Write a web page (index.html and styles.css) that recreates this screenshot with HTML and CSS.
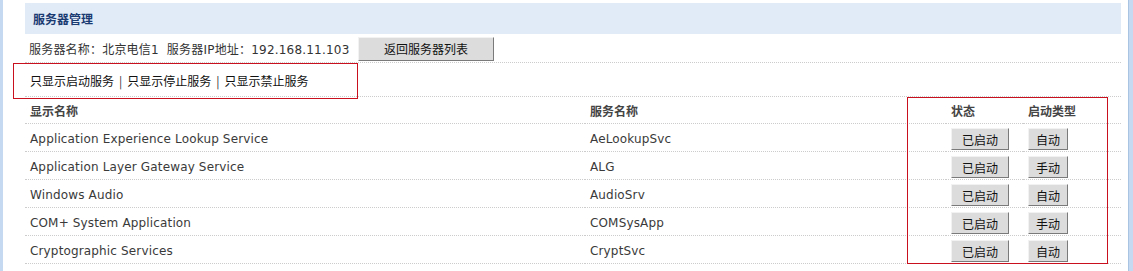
FILE: index.html
```html
<!DOCTYPE html>
<html lang="zh-CN">
<head>
    <meta charset="UTF-8">
    <title>服务器管理</title>
    <link rel="stylesheet" href="styles.css">
</head>
<body>
    <div class="frame">
        <div class="main">
            <div class="title-bar">服务器管理</div>
            <div class="info-row">
                <span class="info">服务器名称：北京电信1&nbsp;&nbsp;服务器IP地址：192.168.11.103</span>
                <button class="btn btn-back">返回服务器列表</button>
            </div>
            <div class="filter-row">
                <div class="filter-box">
                    <a href="#">只显示启动服务</a><span class="sep">|</span><a href="#">只显示停止服务</a><span class="sep">|</span><a href="#">只显示禁止服务</a>
                </div>
            </div>
            <table class="service-table">
                <thead>
                    <tr>
                        <th class="col-name">显示名称</th>
                        <th class="col-svc">服务名称</th>
                        <th class="col-state">状态</th>
                        <th class="col-type">启动类型</th>
                    </tr>
                </thead>
                <tbody>
                    <tr>
                        <td>Application Experience Lookup Service</td>
                        <td>AeLookupSvc</td>
                        <td><button class="btn btn-state">已启动</button></td>
                        <td><button class="btn btn-type">自动</button></td>
                    </tr>
                    <tr>
                        <td>Application Layer Gateway Service</td>
                        <td>ALG</td>
                        <td><button class="btn btn-state">已启动</button></td>
                        <td><button class="btn btn-type">手动</button></td>
                    </tr>
                    <tr>
                        <td>Windows Audio</td>
                        <td>AudioSrv</td>
                        <td><button class="btn btn-state">已启动</button></td>
                        <td><button class="btn btn-type">自动</button></td>
                    </tr>
                    <tr>
                        <td>COM+ System Application</td>
                        <td>COMSysApp</td>
                        <td><button class="btn btn-state">已启动</button></td>
                        <td><button class="btn btn-type">手动</button></td>
                    </tr>
                    <tr>
                        <td>Cryptographic Services</td>
                        <td>CryptSvc</td>
                        <td><button class="btn btn-state">已启动</button></td>
                        <td><button class="btn btn-type">自动</button></td>
                    </tr>
                </tbody>
            </table>
            <div class="state-box"></div>
        </div>
        <div class="side"></div>
    </div>
</body>
</html>
```

FILE: styles.css
```css
body {
    margin: 0;
    padding: 0;
    font-family: "DejaVu Sans", "Noto Sans CJK SC", sans-serif;
    font-size: 12px;
    color: #333;
    background: #fff;
    overflow: hidden;
}
.frame {
    display: flex;
    height: 271px;
    border-left: 3px solid #c5d9f1;
}
.main {
    position: relative;
    flex: 1;
    padding: 3px 7px 0 22px;
}
.side {
    width: 4px;
    background: #c5d9f1;
    border-left: 1px solid #a9c3e3;
}
.title-bar {
    height: 31px;
    line-height: 31px;
    padding-left: 8px;
    background: #e1ebf8;
    color: #1a3a72;
    font-family: "Noto Sans CJK SC", sans-serif;
    font-weight: bold;
}
.info-row {
    display: flex;
    align-items: center;
    height: 28px;
    padding-left: 4px;
    border-bottom: 1px dotted #ccc;
}
.info {
    width: 329px;
    letter-spacing: 0.2px;
}
.btn {
    background: #dcdcdc;
    border: 1px solid #f2f2f2;
    border-right-color: #7a7a7a;
    border-bottom-color: #7a7a7a;
    color: #111;
    font-family: "Noto Sans CJK SC", sans-serif;
    font-size: 12px;
    padding: 0;
    cursor: pointer;
}
.btn-back {
    width: 136px;
    height: 24px;
    margin-top: 1px;
}
.filter-row {
    position: relative;
    height: 33px;
    line-height: 33px;
    border-bottom: 1px dotted #ccc;
    font-family: "Noto Sans CJK SC", sans-serif;
}
.filter-row a {
    color: #111;
    text-decoration: none;
}
.sep {
    margin: 0 5px;
    color: #333;
}
.filter-box {
    position: absolute;
    box-sizing: border-box;
    left: -12px;
    top: 0;
    width: 345px;
    height: 36px;
    line-height: 33px;
    padding-left: 16px;
    border: 1px solid #c8101e;
}
.service-table {
    width: 100%;
    border-collapse: collapse;
}
.service-table th,
.service-table td {
    text-align: left;
    padding: 0 0 0 5px;
    border-bottom: 1px dotted #ccc;
}
.service-table th {
    height: 26px;
    font-family: "Noto Sans CJK SC", sans-serif;
    font-weight: bold;
    color: #444;
}
.service-table td {
    height: 24px;
    padding-top: 3px;
    color: #3a3a3a;
    letter-spacing: 0.15px;
}
.col-name { width: 555px; }
.col-svc { width: 356px; }
.col-state { width: 72px; }
.btn-state {
    width: 58px;
    height: 22px;
}
.btn-type {
    width: 40px;
    height: 22px;
}
.state-box {
    position: absolute;
    box-sizing: border-box;
    left: 904px;
    top: 97px;
    width: 201px;
    height: 167px;
    border: 1px solid #c8101e;
}
```
